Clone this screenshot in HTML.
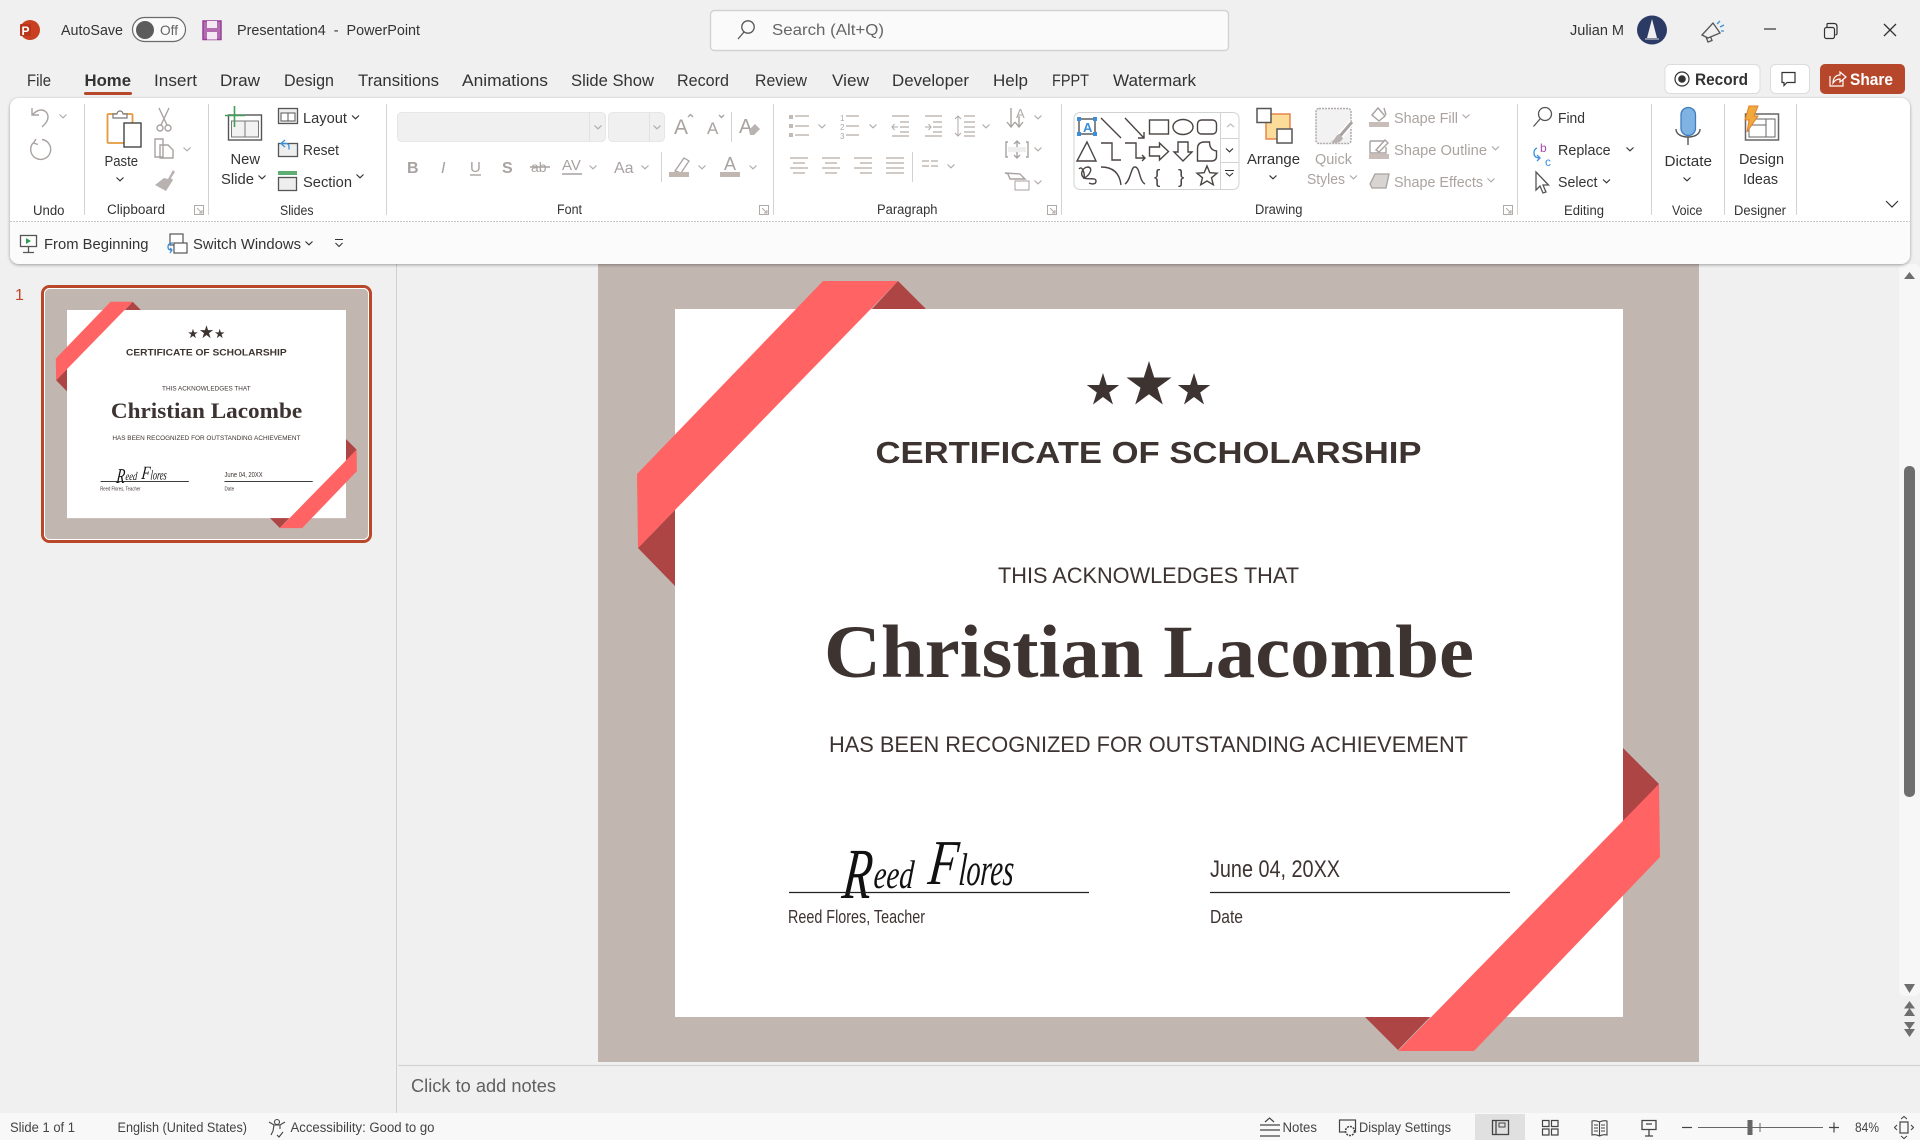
<!DOCTYPE html>
<html lang="en"><head><meta charset="utf-8"><title>Presentation4 - PowerPoint</title>
<style>
html,body{margin:0;padding:0;background:#f0f0f0;width:1920px;height:1140px;overflow:hidden}
svg{display:block;font-family:"Liberation Sans",sans-serif}
text{fill:#333;white-space:pre}
.tab{font-size:16.500px}.r{font-size:15px}.lab{font-size:13.500px;fill:#333}.d{font-size:15px;fill:#aaa3a0}
.st{font-size:13.500px;fill:#444}
.i{fill:none;stroke:#555;stroke-width:1.3}
.g{fill:none;stroke:#a8a2a0;stroke-width:1.4}
.l{fill:none;stroke:#c2bab6;stroke-width:1.5}
.s{fill:#fff;stroke:#4a4442;stroke-width:1.4}
.n{fill:none;stroke:#4a4442;stroke-width:1.4}
.sep{stroke:#d2d2d2;stroke-width:1}
.cert{fill:#3d3331}
.sig{font-family:"Liberation Serif",serif;font-style:italic;fill:#111}
</style></head><body>
<svg width="1920" height="1140" viewBox="0 0 1920 1140" xmlns="http://www.w3.org/2000/svg">
<defs>
<g id="ch"><path d="M-3.5-1.5 0 1.8 3.5-1.5" fill="none" stroke="#333" stroke-width="1.2"/></g>
<g id="cg"><path d="M-3.5-1.5 0 1.8 3.5-1.5" fill="none" stroke="#b0aaa8" stroke-width="1.2"/></g>
<g id="dl"><path d="M-4.5-4.5h9v9h-9zM-2-2l5 5M3 0v3h-3" fill="none" stroke="#b0aaa8" stroke-width="1"/></g>
</defs>
<rect width="1920" height="1140" fill="#f0f0f0"/>

<!-- Title bar -->
<circle cx="30" cy="30" r="10" fill="#c8401f"/><rect x="20" y="24" width="11" height="12" rx="1" fill="#b7361a"/>
<text x="21.500" y="35" font-size="12" font-weight="700" style="fill:#fff">P</text>
<text x="61" y="35" font-size="15" textLength="62" lengthAdjust="spacingAndGlyphs">AutoSave</text>
<rect x="132.500" y="17.500" width="53" height="24" rx="12" fill="#fafafa" stroke="#6a6a6a" stroke-width="1.2"/>
<circle cx="145" cy="30" r="9" fill="#5c5c5c"/>
<text x="160" y="35" font-size="14" style="fill:#666" textLength="18" lengthAdjust="spacingAndGlyphs">Off</text>
<rect x="203" y="21" width="18" height="18.500" fill="#b36cb0" stroke="#96409a" stroke-width="1.500"/><rect x="207" y="21" width="10" height="7" fill="#f4e8f4"/><rect x="207" y="32" width="10" height="7.500" fill="#f4e8f4"/>
<text x="237" y="35" font-size="15" textLength="183" lengthAdjust="spacingAndGlyphs">Presentation4  -  PowerPoint</text>

<rect x="710.500" y="10.500" width="518" height="40" rx="4" fill="#fafafa" stroke="#d2d2d2" stroke-width="1.400"/>
<circle cx="748" cy="27" r="6.200" class="i"/><path d="M744 32l-6 7" class="i"/>
<text x="772" y="35" font-size="16" style="fill:#666" textLength="112" lengthAdjust="spacingAndGlyphs">Search (Alt+Q)</text>

<text x="1570" y="35" font-size="15" textLength="54" lengthAdjust="spacingAndGlyphs">Julian M</text>
<ellipse cx="1652" cy="30" rx="15" ry="14.500" fill="#2b3b66"/><path d="M1652 19l-5 19h10z" fill="#f0f0f0"/><path d="M1645 39h14" stroke="#ddd"/>
<path d="M1702 35l11-12 7 10-12 5zM1706 37l2 5 4-1.500-1.500-4" fill="none" stroke="#555" stroke-width="1.300"/><path d="M1717 24l3-3M1720 27l4-2M1721 31h3" stroke="#3f8fd8" stroke-width="1.300"/>
<path d="M1764 29h12" stroke="#333" stroke-width="1.200"/>
<rect x="1824.500" y="27.500" width="10" height="11" rx="2" fill="none" stroke="#333" stroke-width="1.200"/><path d="M1827 27v-2.500q0-1 1-1h6q3 0 3 3v7q0 1-1.500 1.500" fill="none" stroke="#333" stroke-width="1.200"/>
<path d="M1884 24l12 12M1896 24l-12 12" stroke="#333" stroke-width="1.300"/>

<!-- Tabs -->
<text x="27" y="86" class="tab" textLength="24" lengthAdjust="spacingAndGlyphs">File</text>
<text x="84.500" y="86" class="tab" font-weight="700" textLength="46.500" lengthAdjust="spacingAndGlyphs">Home</text>
<text x="154" y="86" class="tab" textLength="43" lengthAdjust="spacingAndGlyphs">Insert</text>
<text x="220" y="86" class="tab" textLength="40" lengthAdjust="spacingAndGlyphs">Draw</text>
<text x="284" y="86" class="tab" textLength="50" lengthAdjust="spacingAndGlyphs">Design</text>
<text x="358" y="86" class="tab" textLength="81" lengthAdjust="spacingAndGlyphs">Transitions</text>
<text x="462" y="86" class="tab" textLength="86" lengthAdjust="spacingAndGlyphs">Animations</text>
<text x="571" y="86" class="tab" textLength="83" lengthAdjust="spacingAndGlyphs">Slide Show</text>
<text x="677" y="86" class="tab" textLength="52" lengthAdjust="spacingAndGlyphs">Record</text>
<text x="755" y="86" class="tab" textLength="52" lengthAdjust="spacingAndGlyphs">Review</text>
<text x="832" y="86" class="tab" textLength="37" lengthAdjust="spacingAndGlyphs">View</text>
<text x="892" y="86" class="tab" textLength="77" lengthAdjust="spacingAndGlyphs">Developer</text>
<text x="993" y="86" class="tab" textLength="35" lengthAdjust="spacingAndGlyphs">Help</text>
<text x="1052" y="86" class="tab" textLength="37" lengthAdjust="spacingAndGlyphs">FPPT</text>
<text x="1113" y="86" class="tab" textLength="83" lengthAdjust="spacingAndGlyphs">Watermark</text>
<rect x="84" y="92" width="48" height="3" rx="1.500" fill="#b7472a"/>

<rect x="1665" y="64.500" width="95" height="29" rx="5" fill="#fff" stroke="#dcdcdc"/>
<circle cx="1682" cy="79" r="7" fill="none" stroke="#333" stroke-width="1.200"/><circle cx="1682" cy="79" r="3.800" fill="#333"/>
<text x="1695" y="85" font-size="17" font-weight="700" textLength="53" lengthAdjust="spacingAndGlyphs" style="fill:#333">Record</text>
<rect x="1770.500" y="64.500" width="39" height="29" rx="5" fill="#fff" stroke="#dcdcdc"/>
<path d="M1782 72.500h13v10h-8l-3 3v-3h-2z" fill="none" stroke="#333" stroke-width="1.200"/>
<rect x="1820" y="64" width="85" height="30" rx="5" fill="#b7472a"/>
<path d="M1830 76v10h13v-6M1833 83c0-5 3-8 7-8v-3l6 5-6 5v-3c-3 0-5 1-7 4z" fill="none" stroke="#fff" stroke-width="1.200"/>
<text x="1850" y="85" font-size="17" font-weight="700" textLength="43" lengthAdjust="spacingAndGlyphs" style="fill:#fff">Share</text>

<!-- Editor area / slide -->
<path d="M396.500 264V1113" stroke="#d0d0d0"/>
<rect x="1899" y="264" width="21" height="732" rx="6" fill="#f7f7f7"/>
<rect x="598" y="240" width="1101" height="822" fill="#c2b6b1"/>
<rect x="675" y="309" width="948" height="708" fill="#fff"/>
<path d="M898 281 926 309H872ZM638 548 675 586V510Z" fill="#ae4545"/>
<path d="M1623 748 1659 784 1623 822ZM1365 1017 1398 1050 1430 1017Z" fill="#ae4545"/>
<path d="M823 281H898L638 548 637 474Z" fill="#ff6363"/>
<path d="M1659 784 1660 857 1474 1051H1398Z" fill="#ff6363"/>
<path class="cert" d="M1103 373l3.800 12h12.400l-10 7.500 3.800 12-10-7.500-10 7.500 3.800-12-10-7.500h12.400ZM1149 361l5.200 16.500h17.300l-14 10.300 5.300 16.700-13.800-10.300-13.800 10.300 5.300-16.700-14-10.300h17.300ZM1194 373l3.800 12h12.400l-10 7.500 3.800 12-10-7.500-10 7.500 3.800-12-10-7.500h12.400Z"/>
<text class="cert" x="875.500" y="463" font-size="31" font-weight="700" textLength="546" lengthAdjust="spacingAndGlyphs">CERTIFICATE OF SCHOLARSHIP</text>
<text class="cert" x="998" y="583" font-size="22" textLength="301" lengthAdjust="spacingAndGlyphs">THIS ACKNOWLEDGES THAT</text>
<text class="cert" x="824" y="677" font-size="75" font-weight="700" style="font-family:'Liberation Serif',serif" textLength="650" lengthAdjust="spacingAndGlyphs">Christian Lacombe</text>
<text class="cert" x="829" y="752" font-size="22" textLength="639" lengthAdjust="spacingAndGlyphs">HAS BEEN RECOGNIZED FOR OUTSTANDING ACHIEVEMENT</text>
<text class="sig" transform="translate(841 898) skewX(-6)" font-size="72" textLength="29" lengthAdjust="spacingAndGlyphs">R</text>
<text class="sig" transform="translate(873 888) skewX(-4)" font-size="40" textLength="40" lengthAdjust="spacingAndGlyphs">eed</text>
<text class="sig" transform="translate(927 884) skewX(-6)" font-size="64" textLength="29" lengthAdjust="spacingAndGlyphs">F</text>
<text class="sig" transform="translate(958 885) skewX(-4)" font-size="46" textLength="55" lengthAdjust="spacingAndGlyphs">lores</text>
<path d="M789 892.500H1089M1210 892.500H1510" stroke="#222" stroke-width="1.300"/>
<text class="cert" x="1210" y="877" font-size="24" textLength="130" lengthAdjust="spacingAndGlyphs">June 04, 20XX</text>
<text class="cert" x="788" y="923" font-size="18" textLength="137" lengthAdjust="spacingAndGlyphs">Reed Flores, Teacher</text>
<text class="cert" x="1210" y="923" font-size="18" textLength="33" lengthAdjust="spacingAndGlyphs">Date</text>

<!-- Thumbnail -->
<text x="15" y="300" font-size="16" style="fill:#c0462a">1</text>
<rect x="42.500" y="286.500" width="328" height="255" rx="7" fill="#c2b6b1" stroke="#b9472a" stroke-width="3"/>
<rect x="44.500" y="288.500" width="324" height="251" rx="5" fill="none" stroke="#fff"/>
<g transform="translate(-131.650 219.150) scale(.2943 .294)">
<rect x="675" y="309" width="948" height="708" fill="#fff"/>
<path d="M898 281 926 309H872ZM638 548 675 586V510Z" fill="#ae4545"/>
<path d="M1623 748 1659 784 1623 822ZM1365 1017 1398 1050 1430 1017Z" fill="#ae4545"/>
<path d="M823 281H898L638 548 637 474Z" fill="#ff6363"/>
<path d="M1659 784 1660 857 1474 1051H1398Z" fill="#ff6363"/>
<path class="cert" d="M1103 373l3.800 12h12.400l-10 7.500 3.800 12-10-7.500-10 7.500 3.800-12-10-7.500h12.400ZM1149 361l5.200 16.500h17.300l-14 10.300 5.300 16.700-13.800-10.300-13.800 10.300 5.300-16.700-14-10.300h17.300ZM1194 373l3.800 12h12.400l-10 7.500 3.800 12-10-7.500-10 7.500 3.800-12-10-7.500h12.400Z"/>
<text class="cert" x="875.500" y="463" font-size="31" font-weight="700" textLength="546" lengthAdjust="spacingAndGlyphs">CERTIFICATE OF SCHOLARSHIP</text>
<text class="cert" x="998" y="583" font-size="22" textLength="301" lengthAdjust="spacingAndGlyphs">THIS ACKNOWLEDGES THAT</text>
<text class="cert" x="824" y="677" font-size="75" font-weight="700" style="font-family:'Liberation Serif',serif" textLength="650" lengthAdjust="spacingAndGlyphs">Christian Lacombe</text>
<text class="cert" x="829" y="752" font-size="22" textLength="639" lengthAdjust="spacingAndGlyphs">HAS BEEN RECOGNIZED FOR OUTSTANDING ACHIEVEMENT</text>
<text class="sig" transform="translate(841 898) skewX(-6)" font-size="72" textLength="29" lengthAdjust="spacingAndGlyphs">R</text>
<text class="sig" transform="translate(873 888) skewX(-4)" font-size="40" textLength="40" lengthAdjust="spacingAndGlyphs">eed</text>
<text class="sig" transform="translate(927 884) skewX(-6)" font-size="64" textLength="29" lengthAdjust="spacingAndGlyphs">F</text>
<text class="sig" transform="translate(958 885) skewX(-4)" font-size="46" textLength="55" lengthAdjust="spacingAndGlyphs">lores</text>
<path d="M789 892.500H1089M1210 892.500H1510" stroke="#222" stroke-width="3"/>
<text class="cert" x="1210" y="877" font-size="24" textLength="130" lengthAdjust="spacingAndGlyphs">June 04, 20XX</text>
<text class="cert" x="788" y="923" font-size="18" textLength="137" lengthAdjust="spacingAndGlyphs">Reed Flores, Teacher</text>
<text class="cert" x="1210" y="923" font-size="18" textLength="33" lengthAdjust="spacingAndGlyphs">Date</text>
</g>

<!-- Ribbon card -->
<rect x="10" y="98" width="1900" height="166" rx="9" fill="#fff" style="filter:drop-shadow(0 1.500px 1.500px rgba(0,0,0,.35))"/>
<path d="M10 221.500V255a9 9 0 0 0 9 9H1901a9 9 0 0 0 9-9V221.500Z" fill="#fbfbfb"/>
<path d="M10 221.500H1910" stroke="#c8c8c8" stroke-dasharray="2 1"/>
<path class="sep" d="M84.500 104V215M208.500 104V215M386.500 104V215M773.500 104V215M1061.500 104V215M1517.500 104V215M1651.500 104V215M1724.500 104V215M1796.500 104V215"/>

<!-- Group labels -->
<text class="lab" x="33" y="215" textLength="31.500" lengthAdjust="spacingAndGlyphs">Undo</text>
<text class="lab" x="107" y="214" textLength="58" lengthAdjust="spacingAndGlyphs">Clipboard</text>
<text class="lab" x="280" y="215" textLength="33.500" lengthAdjust="spacingAndGlyphs">Slides</text>
<text class="lab" x="557" y="214" textLength="25" lengthAdjust="spacingAndGlyphs">Font</text>
<text class="lab" x="877" y="214" textLength="60.500" lengthAdjust="spacingAndGlyphs">Paragraph</text>
<text class="lab" x="1255" y="214" textLength="47.500" lengthAdjust="spacingAndGlyphs">Drawing</text>
<text class="lab" x="1564" y="215" textLength="40" lengthAdjust="spacingAndGlyphs">Editing</text>
<text class="lab" x="1672" y="215" textLength="30.500" lengthAdjust="spacingAndGlyphs">Voice</text>
<text class="lab" x="1734" y="215" textLength="52" lengthAdjust="spacingAndGlyphs">Designer</text>
<use href="#dl" x="199" y="210"/><use href="#dl" x="764" y="210"/><use href="#dl" x="1052" y="210"/><use href="#dl" x="1508" y="210"/>

<!-- Undo -->
<path class="g" d="M32 108v7h7M32 115c3-3 6-5 9-5 4 0 7 3 7 7 0 4-3 7-6 10"/>
<use href="#cg" x="63" y="116"/>
<path class="g" d="M33 143a10 10 0 1 0 9-3.500M36 139l-2.500 4 4.500 1.500"/>

<!-- Clipboard -->
<rect x="107.500" y="114" width="25" height="29" rx="1" fill="#fff" stroke="#e39a3b" stroke-width="1.800"/>
<path d="M113 118v-4h4a3 3 0 0 1 6 0h4v4z" fill="#fff" stroke="#777" stroke-width="1.200"/>
<rect x="124" y="123" width="17" height="24" fill="#fff" stroke="#444" stroke-width="1.400"/>
<text class="r" x="104.500" y="166" textLength="33.500" lengthAdjust="spacingAndGlyphs">Paste</text>
<use href="#ch" x="120" y="179"/>
<path class="g" d="M159 108l8 17M169 108l-8 17"/><circle class="g" cx="160" cy="128" r="3"/><circle class="g" cx="168" cy="128" r="3"/>
<path class="g" d="M155 139h8v18h-8zM160 145h8l5 5v8h-13z" fill="#fff"/><use href="#cg" x="187" y="149"/>
<path d="M173 170l2 2-4 6 2 2-7 11-11-6 9-7 4 1z" fill="#b8b2b0"/>

<!-- Slides -->
<rect x="228.500" y="115" width="33" height="25" fill="none" stroke="#555" stroke-width="1.400"/>
<rect x="231.500" y="121" width="27" height="16" fill="#f2f2f2" stroke="#777"/><path d="M245 121v16" stroke="#777"/>
<path d="M234.500 106v21M225 115.500h20" stroke="#43a05a" stroke-width="1.600"/>
<text class="r" x="230.500" y="164" textLength="29.500" lengthAdjust="spacingAndGlyphs">New</text>
<text class="r" x="221" y="184" textLength="33" lengthAdjust="spacingAndGlyphs">Slide</text><use href="#ch" x="262" y="177"/>
<rect x="278.500" y="108.500" width="19" height="15" fill="#eee" stroke="#555" stroke-width="1.300"/><rect x="281" y="113" width="14" height="8" fill="#fff" stroke="#555"/><path d="M288 113v8" stroke="#555"/>
<text class="r" x="303" y="123" textLength="44" lengthAdjust="spacingAndGlyphs">Layout</text><use href="#ch" x="355.500" y="117"/>
<rect x="278.500" y="143.500" width="19" height="13" fill="#eee" stroke="#555" stroke-width="1.300"/><path d="M285 140l-4 3.500 4 3.500M282 143.500h4q3 0 3 3v3" fill="none" stroke="#3b8fd8" stroke-width="1.300"/>
<text class="r" x="303" y="155" textLength="36" lengthAdjust="spacingAndGlyphs">Reset</text>
<rect x="278" y="171" width="19" height="4" fill="#5fae74"/><rect x="278.500" y="177.500" width="18" height="13" fill="#eee" stroke="#555" stroke-width="1.300"/>
<text class="r" x="303" y="187" textLength="49" lengthAdjust="spacingAndGlyphs">Section</text><use href="#ch" x="360" y="176"/>

<!-- Font -->
<rect x="397.500" y="112.500" width="208" height="29" rx="4" fill="#f0f0f0" stroke="#e6e6e6"/><path d="M589.500 113v28" stroke="#e2e2e2"/><use href="#cg" x="598" y="127"/>
<rect x="608.500" y="112.500" width="56" height="29" rx="4" fill="#f0f0f0" stroke="#e6e6e6"/><path d="M649.500 113v28" stroke="#e2e2e2"/><use href="#cg" x="657" y="127"/>
<text x="674" y="134" font-size="21" style="fill:#a8a2a0">A</text><path class="g" d="M688 117l2.500-2.500 2.500 2.500"/>
<text x="707" y="134" font-size="17" style="fill:#a8a2a0">A</text><path class="g" d="M719 115l2.500 2.500 2.500-2.500"/>
<path class="sep" d="M731.500 112v30"/>
<text x="739" y="133" font-size="20" style="fill:#a8a2a0">A</text><path d="M749 130l6-6 5 5-6 6h-4z" fill="#b8b2b0"/>
<text x="407" y="173" font-size="16" font-weight="700" style="fill:#a8a2a0">B</text>
<text x="441" y="173" font-size="16" font-style="italic" style="fill:#a8a2a0">I</text>
<text x="470" y="172" font-size="15" style="fill:#a8a2a0">U</text><path class="g" d="M470 175h11"/>
<text x="502" y="173" font-size="16" font-weight="700" style="fill:#a8a2a0">S</text>
<text x="531" y="172" font-size="14" style="fill:#a8a2a0">ab</text><path class="g" d="M530 167h20"/>
<text x="562" y="170" font-size="15" style="fill:#a8a2a0">AV</text><path class="g" d="M562 174h20"/>
<text x="614" y="173" font-size="16" style="fill:#a8a2a0">Aa</text>
<use href="#cg" x="593" y="167"/><use href="#cg" x="645" y="167"/>
<path class="sep" d="M661.500 152v30"/>
<path d="M675 171l9-13 5 3-8 12z" fill="none" stroke="#a8a2a0" stroke-width="1.300"/><rect x="669" y="172" width="20" height="5" fill="#c2b6b1"/>
<use href="#cg" x="702" y="167"/>
<text x="724" y="170" font-size="18" style="fill:#a8a2a0">A</text><rect x="720" y="172" width="20" height="5" fill="#c2b6b1"/>
<use href="#cg" x="753" y="167"/>

<!-- Paragraph -->
<path d="M789 115h4v4h-4zM789 124h4v4h-4zM789 133h4v4h-4z" fill="#c2bab6"/><path class="l" d="M795 116h14M795 126h14M795 135h14"/>
<use href="#cg" x="822" y="126"/>
<text x="840" y="121" font-size="8" style="fill:#aaa">1</text><text x="840" y="130" font-size="8" style="fill:#aaa">2</text><text x="840" y="139" font-size="8" style="fill:#aaa">3</text>
<path class="l" d="M846 116h13M846 126h13M846 135h13"/><use href="#cg" x="873" y="126"/>
<path class="l" d="M892 116h17M900 122h9M900 127h9M900 132h9M892 136h17"/><path d="M898 127h-6m2.500-3-2.500 3 2.500 3" fill="none" stroke="#b0aaa8"/>
<path class="l" d="M925 116h17M933 122h9M933 127h9M933 132h9M925 136h17"/><path d="M925 127h6m-2.500-3 2.500 3-2.500 3" fill="none" stroke="#b0aaa8"/>
<path class="l" d="M964 116h11M964 122h11M964 127h11M964 132h11M964 136h11"/><path d="M958 116v20m-3-17 3-3 3 3m-6 14 3 3 3-3" fill="none" stroke="#b0aaa8"/><use href="#cg" x="986" y="126"/>
<path class="g" d="M1011 108v18m-4-4 4 5 4-5M1019 116v10m-4-4 4 5 4-5"/><text x="1016" y="118" font-size="13" style="fill:#b0aaa8">A</text><use href="#cg" x="1038" y="117"/>
<path class="g" d="M1008 142h-2v15h2M1026 142h2v15h-2M1017 141v6m-3-3 3-3 3 3M1017 158v-6m-3 3 3 3 3-3"/><rect x="1008" y="147" width="18" height="5" fill="#eee"/><use href="#cg" x="1038" y="149"/>
<path class="g" d="M1008 174l-3-1 15 1 5 5h-15z"/><rect x="1015" y="181" width="14" height="9" fill="#fff" stroke="#a8a2a0"/><use href="#cg" x="1038" y="182"/>
<path class="l" d="M790 158h18M793 163h12M790 168h18M793 173h12"/>
<path class="l" d="M822 158h18M825 163h12M822 168h18M825 173h12"/>
<path class="l" d="M854 158h18M860 163h12M854 168h18M860 173h12"/>
<path class="l" d="M886 158h18M886 163h18M886 168h18M886 173h18"/>
<path class="sep" d="M912.500 152v30"/>
<path class="l" d="M922 161h7M922 166h7M931 161h7M931 166h7"/><use href="#cg" x="951" y="166"/>

<!-- Shapes gallery -->
<rect x="1074" y="112.500" width="165" height="77" rx="6" fill="#fff" stroke="#d2d2d2"/>
<path d="M1220.500 113v76M1221 138.500h18M1221 162.500h18" stroke="#d2d2d2"/>
<path d="M1227 127l3.500-3 3.500 3" fill="none" stroke="#c0bcba" stroke-width="1.200"/>
<use href="#ch" x="1229.500" y="150"/>
<path d="M1225 170.500h9M1226 173l3.500 3 3.500-3" fill="none" stroke="#333" stroke-width="1.100"/>
<rect x="1079" y="119" width="16" height="15" fill="none" stroke="#444" stroke-width="1.300"/>
<path fill="#3d8ed8" d="M1077 117h4v4h-4zM1093 117h4v4h-4zM1077 132h4v4h-4zM1093 132h4v4h-4z"/>
<text x="1083" y="132" font-size="13" font-weight="700" style="fill:#3d8ed8">A</text>
<path class="n" d="M1101 118l20 20M1125 118l19 20m-6 0h6v-6"/>
<rect class="s" x="1149.500" y="120" width="19" height="14"/>
<ellipse class="s" cx="1183" cy="127" rx="10" ry="7.500"/>
<rect class="s" x="1197.500" y="120" width="19" height="14" rx="4"/>
<path class="s" d="M1087 142l9 19h-19z"/>
<path class="n" d="M1101 143h11v17h9M1125 143h11v15h9m-3-3 3 3-3 3"/>
<path class="s" d="M1149.500 147h10v-4l9 8.500-9 8.500v-4h-10z"/>
<path class="s" d="M1178 142h10v10h4l-9 9-9-9h4z"/>
<path class="s" d="M1197.500 149q0-7 7-7h5q0 8 7 9v5q0 5-5 5h-14z"/>
<path class="n" d="M1079 169c3-4 6 4 5 9 5-2 10-10 4-11-5 0-9 7-4 11 4 2 12-1 12 3s-5 3-7 2"/>
<path class="n" d="M1101 167q18 0 20 18M1125 184c6-4 6-18 10-17 5 0 4 14 10 17"/>
<text x="1154" y="183" font-size="19" style="fill:#4a4442">{</text><text x="1178" y="183" font-size="19" style="fill:#4a4442">}</text>
<path class="s" d="M1207 166l2.800 6.700 7.200.5-5.500 4.600 1.800 7-6.300-3.800-6.300 3.800 1.800-7-5.500-4.600 7.200-.5z"/>

<!-- Drawing right -->
<rect x="1266" y="114" width="24" height="25" fill="#fbdc98" stroke="#e8854a" stroke-width="1.500"/>
<rect x="1257" y="108.500" width="14" height="14" fill="#fff" stroke="#555" stroke-width="1.500"/>
<rect x="1277" y="129" width="15" height="14" fill="#fff" stroke="#555" stroke-width="1.500"/>
<text class="r" x="1247" y="164" textLength="53" lengthAdjust="spacingAndGlyphs">Arrange</text><use href="#ch" x="1273" y="177"/>
<rect x="1316" y="108.500" width="35" height="35" rx="3" fill="#f2f2f2" stroke="#b0aaa8" stroke-dasharray="2 1" stroke-width="1.500"/>
<path d="M1352 122l-12 14" stroke="#fff" stroke-width="6"/><path d="M1352 122l-12 14" stroke="#a8a2a0" stroke-width="3"/><path d="M1339 134c-3 1-3 5-8 8 4 2 10 1 12-4z" fill="#b8b2b0"/>
<text class="d" x="1315" y="164" textLength="37" lengthAdjust="spacingAndGlyphs">Quick</text>
<text class="d" x="1307" y="184" textLength="38" lengthAdjust="spacingAndGlyphs">Styles</text><use href="#cg" x="1353.500" y="177"/>
<path class="g" d="M1372 115l6-7 7 8-6 5zM1384 108l2 7"/><rect x="1369" y="122" width="20" height="5" fill="#c8bdb8"/>
<text class="d" x="1394" y="123" textLength="64" lengthAdjust="spacingAndGlyphs">Shape Fill</text><use href="#cg" x="1466" y="116"/>
<path class="g" d="M1370 141h14M1370 141v12h16v-6M1376 150l9-10 3 3-9 9z"/><rect x="1369" y="154" width="20" height="5" fill="#c8bdb8"/>
<text class="d" x="1394" y="155" textLength="93" lengthAdjust="spacingAndGlyphs">Shape Outline</text><use href="#cg" x="1495.500" y="148"/>
<path d="M1375 174h14l-3 14h-14l-2-4z" fill="#d8d4d2" stroke="#a8a2a0" stroke-width="1.300"/>
<text class="d" x="1394" y="187" textLength="89" lengthAdjust="spacingAndGlyphs">Shape Effects</text><use href="#cg" x="1491" y="180"/>

<!-- Editing -->
<circle cx="1545" cy="114" r="6.500" class="i"/><path class="i" d="M1540 119l-6.500 7.500"/>
<text class="r" x="1558" y="123" textLength="27" lengthAdjust="spacingAndGlyphs">Find</text>
<text x="1540" y="152" font-size="12" style="fill:#a84bb0">b</text><text x="1545" y="166" font-size="12" style="fill:#3b8fd8">c</text>
<path d="M1537 148a5 5 0 0 0-3 5c0 4 3 5 6 5m-3-3 3 3-3 3" fill="none" stroke="#3b8fd8" stroke-width="1.300"/>
<text class="r" x="1558" y="155" textLength="52.600" lengthAdjust="spacingAndGlyphs">Replace</text><use href="#ch" x="1630" y="149"/>
<path class="i" d="M1536 172v18l4-4 3 7 3-1-3-7h5.500z" fill="#fff"/>
<text class="r" x="1558" y="187" textLength="39.500" lengthAdjust="spacingAndGlyphs">Select</text><use href="#ch" x="1606.500" y="181"/>

<!-- Voice -->
<rect x="1681" y="107.500" width="14.500" height="28" rx="7.200" fill="#7fb3e3" stroke="#3f7dbd" stroke-width="1.300"/>
<path d="M1676 129c0 5 5 8 12 8s12-3 12-8M1688 137v8" fill="none" stroke="#555" stroke-width="1.400"/>
<text class="r" x="1664.500" y="166" textLength="47.500" lengthAdjust="spacingAndGlyphs">Dictate</text><use href="#ch" x="1687" y="179"/>

<!-- Designer -->
<rect x="1745.500" y="114" width="33" height="26" fill="#fff" stroke="#666" stroke-width="1.500"/>
<path d="M1749 119h26v18h-26zM1766 119v18M1749 125h17" fill="none" stroke="#666"/>
<path d="M1749 106h9l-4 10h4l-11 16 2-12h-4z" fill="#f2a93b" stroke="#e0802c"/>
<text class="r" x="1739" y="164" textLength="45" lengthAdjust="spacingAndGlyphs">Design</text>
<text class="r" x="1743" y="184" textLength="35" lengthAdjust="spacingAndGlyphs">Ideas</text>
<path d="M1886 201l6 6 6-6" fill="none" stroke="#333" stroke-width="1.200"/>

<!-- QAT -->
<rect x="20.500" y="235.500" width="16" height="11" fill="#fff" stroke="#555" stroke-width="1.300"/><path d="M26 238v6l5-3z" fill="#2f9e55"/><path d="M28.500 247v5M23 252.500h11" stroke="#555" stroke-width="1.300"/>
<text x="44" y="249" font-size="15" textLength="104.500" lengthAdjust="spacingAndGlyphs">From Beginning</text>
<rect x="170" y="234" width="13" height="11" fill="#fff" stroke="#555" stroke-width="1.200"/><rect x="174" y="243" width="13" height="10" fill="#fff" stroke="#555" stroke-width="1.200"/>
<path d="M173 243c-3 0-5 1-5 4s2 3 4 3m-2-2 2 2-2 3" fill="none" stroke="#3b8fd8" stroke-width="1.300"/>
<text x="193" y="249" font-size="15" textLength="108" lengthAdjust="spacingAndGlyphs">Switch Windows</text><use href="#ch" x="309" y="243"/>
<path d="M335 239.500h8M335.500 243l3.500 3.500 3.500-3.500" fill="none" stroke="#333" stroke-width="1.100"/>

<!-- Notes -->
<path d="M398 1065.500H1920" stroke="#d4d4d4" stroke-width="1.200"/>
<text x="411" y="1092" font-size="18" style="fill:#606060" textLength="145" lengthAdjust="spacingAndGlyphs">Click to add notes</text>

<!-- Scrollbar -->
<path d="M1904 279l5.500-7 5.500 7z" fill="#6e6e6e"/>
<rect x="1904" y="466" width="11" height="331" rx="5" fill="#6e6e6e"/>
<path d="M1904 984h11l-5.500 9z" fill="#6e6e6e"/>
<path d="M1909.500 1001l5.500 7.500h-11zM1909.500 1008l5.500 8h-11z" fill="#6e6e6e"/>
<path d="M1904 1022h11l-5.500 7.500zM1904 1029h11l-5.500 8z" fill="#6e6e6e"/>

<!-- Status bar -->
<rect y="1113" width="1920" height="27" fill="#f8f8f8"/>
<text class="st" x="10" y="1132" textLength="65" lengthAdjust="spacingAndGlyphs">Slide 1 of 1</text>
<text class="st" x="117.500" y="1132" textLength="129.500" lengthAdjust="spacingAndGlyphs">English (United States)</text>
<circle cx="277" cy="1122" r="2.500" fill="none" stroke="#444" stroke-width="1.100"/><path d="M269 1122l5 3h6l5-3M274 1125l-1 6-2 4M280 1125v4M277 1135l2 2 4-5" fill="none" stroke="#444" stroke-width="1.100"/>
<text class="st" x="290.500" y="1132" textLength="144" lengthAdjust="spacingAndGlyphs">Accessibility: Good to go</text>
<path d="M1265 1122l4.500-4 4.500 4M1260 1125h20M1260 1130h20M1260 1136h20" fill="none" stroke="#444" stroke-width="1.200"/>
<text class="st" x="1282.500" y="1132" textLength="34.500" lengthAdjust="spacingAndGlyphs">Notes</text>
<rect x="1339.500" y="1120" width="16" height="12" fill="none" stroke="#444" stroke-width="1.200"/><circle cx="1350" cy="1131" r="4.500" fill="#f8f8f8" stroke="#444" stroke-width="1.500" stroke-dasharray="2 1"/>
<text class="st" x="1359" y="1132" textLength="92" lengthAdjust="spacingAndGlyphs">Display Settings</text>
<rect x="1475" y="1114" width="50" height="26" fill="#e0e0e0"/>
<rect x="1492.500" y="1120.500" width="16" height="14" fill="none" stroke="#444" stroke-width="1.300"/><path d="M1496 1121v13" stroke="#444" stroke-width="1.300"/><rect x="1499" y="1123" width="6" height="4" fill="none" stroke="#444"/>
<path d="M1542.500 1120.500h6.500v6h-6.500zM1551.500 1120.500h6.500v6h-6.500zM1542.500 1129h6.500v6h-6.500zM1551.500 1129h6.500v6h-6.500z" fill="none" stroke="#444" stroke-width="1.200"/>
<path d="M1592 1121q4-1 7.500 1 3.500-2 7.500-1v14q-4-1-7.500 1-3.500-2-7.500-1zM1599.500 1122v14M1594 1125h4M1594 1128h4M1594 1131h4M1601 1125h4M1601 1128h4M1601 1131h4" fill="none" stroke="#444" stroke-width="1.100"/>
<path d="M1642 1120.500h14v9h-14zM1649 1129.500v6M1645 1136h8M1646 1124h6" fill="none" stroke="#444" stroke-width="1.300"/>
<path d="M1682 1127.500h10" stroke="#444" stroke-width="1.200"/>
<path d="M1698 1127.500h125" stroke="#666"/>
<rect x="1747.500" y="1120" width="5" height="15" fill="#666"/><path d="M1760 1123v9" stroke="#666"/>
<path d="M1829 1127.500h10M1834 1122.500v10" stroke="#444" stroke-width="1.200"/>
<text class="st" x="1855" y="1132" textLength="24" lengthAdjust="spacingAndGlyphs">84%</text>
<rect x="1900" y="1122" width="8" height="11" fill="none" stroke="#444" stroke-width="1.200"/><path d="M1901 1119l3-2.500 3 2.500M1901 1136l3 2.500 3-2.500M1897 1125l-2.500 2.500 2.500 2.500M1911 1125l2.500 2.500-2.500 2.500" fill="none" stroke="#444" stroke-width="1.100"/>
</svg>
</body></html>
